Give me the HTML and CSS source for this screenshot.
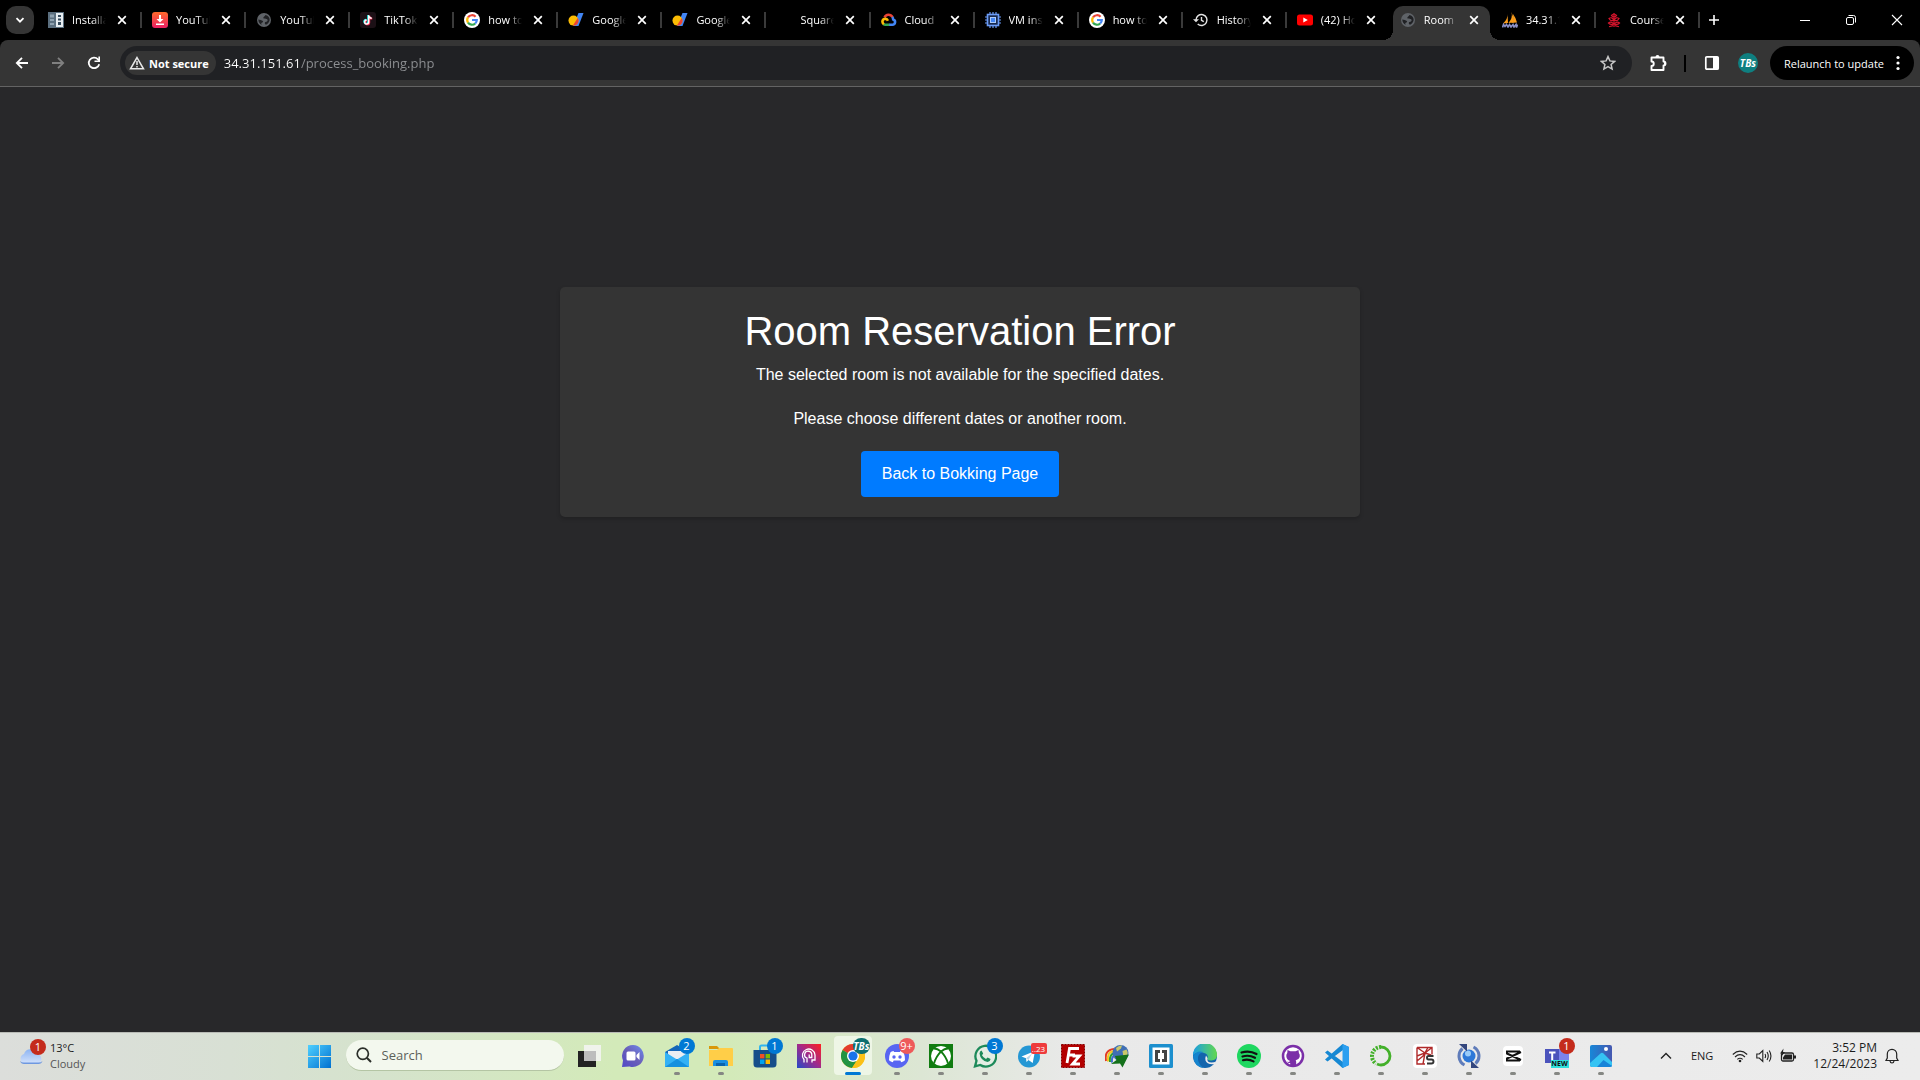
FILE: index.html
```html
<!DOCTYPE html>
<html lang="en">
<head>
<meta charset="utf-8">
<title>Room Reservation Error</title>
<meta name="viewport" content="width=device-width, initial-scale=1">
<link rel="stylesheet" href="styles.css">
</head>
<body>
<svg class="sprite" aria-hidden="true">
  <symbol id="x" viewBox="0 0 10 10"><path d="M1.2 1.2l7.6 7.6M8.8 1.2L1.2 8.8" stroke="currentColor" stroke-width="1.7" fill="none"/></symbol>
  <symbol id="globe" viewBox="0 0 16 16"><circle cx="8" cy="8" r="7" fill="#5f6368"/><path d="M2.300 7.500c1.500.6 3.500.4 4.500 1.500s-.6 1.800-1.600 1.900l.5 1.900c-2-.7-3.400-2.800-3.400-5.300zM9.200 3c.4 1.200-1.700 1.500-1.900 2.700s2.200.9 3.400 1.300 1.200 1.800.3 2.400-2.200.2-2.200 1.500.9 1.900 1.900 1.500c2-1.100 3.100-3 2.900-5.300-.3-2-1.600-3.600-4.400-4.100z" fill="#202124"/></symbol>
  <symbol id="google" viewBox="0 0 16 16"><circle cx="8" cy="8" r="8" fill="#fff"/><g fill="none" stroke-width="2.200"><path d="M4 5.400A4.800 4.800 0 0 1 11.600 4.800" stroke="#ea4335"/><path d="M4 5.400a4.800 4.800 0 0 0 0 5.200" stroke="#fbbc05"/><path d="M4 10.600a4.800 4.800 0 0 0 7.200.9" stroke="#34a853"/><path d="M8 8h4.800a4.800 4.800 0 0 1-1.600 3.500" stroke="#4285f4"/></g></symbol>
  <symbol id="domains" viewBox="0 0 16 16"><path d="M10.500 1H15.500L10.500 14H5.200z" fill="#4285f4"/><circle cx="5.500" cy="8.600" r="5" fill="#fbbc04"/><path d="M9.700 5.900a5 5 0 0 1-3.500 7.700q-.7.100-1.300 0z" fill="#ea4335"/></symbol>
</svg>

<header class="browser">
  <div class="strip">
    <button class="tab-search" aria-label="Search tabs"><svg width="12" height="12" viewBox="0 0 12 12"><path d="M2.500 4.200L6 7.700l3.500-3.500" fill="none" stroke="#fff" stroke-width="1.800"/></svg></button>
    <div class="tabs">
      <div class="tab"><svg class="fav" viewBox="0 0 16 16"><path d="M0 0h16v16H0z" fill="#5b6f7f"/><path d="M8 1h7v14H8z" fill="#e8eef2"/><path d="M2 2.500h4v3H2zM2 7h4v2H2zM2 11h4v2H2z" fill="#8fa2b0"/><path d="M10 3h3v2h-3zM10 6.500h3v2h-3zM10 10h3v3h-3z" fill="#34495a"/></svg><span class="name">Installa</span><button class="close" aria-label="Close tab"><svg><use href="#x"/></svg></button></div>
      <div class="tab"><svg class="fav" viewBox="0 0 16 16"><defs><linearGradient id="yd" x2="0" y2="1"><stop stop-color="#ff6a2c"/><stop offset="1" stop-color="#ea1e63"/></linearGradient></defs><rect width="16" height="16" rx="3" fill="url(#yd)"/><path d="M7 3h2v4h2.500L8 10.500 4.500 7H7zM4 11.500h8V13H4z" fill="#fff"/></svg><span class="name">YouTub</span><button class="close" aria-label="Close tab"><svg><use href="#x"/></svg></button></div>
      <div class="tab"><svg class="fav"><use href="#globe"/></svg><span class="name">YouTub</span><button class="close" aria-label="Close tab"><svg><use href="#x"/></svg></button></div>
      <div class="tab"><svg class="fav" viewBox="0 0 16 16"><rect width="16" height="16" rx="3" fill="#1c1016"/><g fill="none" stroke-width="1.800"><path d="M8.100 3v6.600a2 2 0 1 1-2-2M8.100 3.500c.3 1.600 1.600 2.300 3 2.400" stroke="#25f4ee"/><path d="M9.300 3.800v6.600a2 2 0 1 1-2-2M9.300 4c.3 1.600 1.600 2.600 3 2.700" stroke="#fe2c55"/><path d="M8.700 3.300V10a2 2 0 1 1-2-2M8.700 3.600c.3 1.600 1.600 2.500 3 2.600" stroke="#fff" stroke-width="1.400"/></g></svg><span class="name">TikTok</span><button class="close" aria-label="Close tab"><svg><use href="#x"/></svg></button></div>
      <div class="tab"><svg class="fav"><use href="#google"/></svg><span class="name">how to</span><button class="close" aria-label="Close tab"><svg><use href="#x"/></svg></button></div>
      <div class="tab"><svg class="fav"><use href="#domains"/></svg><span class="name">Google</span><button class="close" aria-label="Close tab"><svg><use href="#x"/></svg></button></div>
      <div class="tab"><svg class="fav"><use href="#domains"/></svg><span class="name">Google</span><button class="close" aria-label="Close tab"><svg><use href="#x"/></svg></button></div>
      <div class="tab"><svg class="fav"></svg><span class="name">Square</span><button class="close" aria-label="Close tab"><svg><use href="#x"/></svg></button></div>
      <div class="tab"><svg class="fav" viewBox="0 0 16 16"><g fill="none" stroke-width="2.600"><path d="M3.600 5.500C5 2 9.500 1.700 11.600 5.200" stroke="#ea4335"/><path d="M11.200 5c.7.800 1 1.600 1 2.400 2.800.9 2.400 5.300-.8 5.300H8" stroke="#4285f4"/><path d="M8.300 12.700H4.200q-1 0-1.700-.6" stroke="#34a853"/><path d="M2.800 12.300C.3 10.300 1.600 6.700 4.400 6.800q1.800.2 2.500 2" stroke="#fbbc05"/></g></svg><span class="name">Cloud</span><button class="close" aria-label="Close tab"><svg><use href="#x"/></svg></button></div>
      <div class="tab"><svg class="fav" viewBox="0 0 16 16"><path d="M5 0v16M8 0v16M11 0v16M0 5h16M0 8h16M0 11h16" stroke="#6b9cf7" stroke-width="1.200"/><rect x="2.500" y="2.500" width="11" height="11" fill="#17294d" stroke="#6b9cf7" stroke-width="1.600"/><rect x="5.500" y="5.500" width="5" height="5" fill="#4285f4" stroke="#aecbfa"/></svg><span class="name">VM inst</span><button class="close" aria-label="Close tab"><svg><use href="#x"/></svg></button></div>
      <div class="tab"><svg class="fav"><use href="#google"/></svg><span class="name">how to</span><button class="close" aria-label="Close tab"><svg><use href="#x"/></svg></button></div>
      <div class="tab"><svg class="fav" viewBox="0 0 16 16"><path d="M3 8a5.500 5.500 0 1 1 1.700 4M8.500 5v3.300l2.300 1.400" fill="none" stroke="#e3e3e3" stroke-width="1.400"/><path d="M0 7.300h6L3 10.300z" fill="#e3e3e3"/></svg><span class="name">History</span><button class="close" aria-label="Close tab"><svg><use href="#x"/></svg></button></div>
      <div class="tab last-before"><svg class="fav" viewBox="0 0 16 16"><rect y="2.500" width="16" height="11" rx="2.500" fill="#f00"/><path d="M6.300 5.500v5L10.800 8z" fill="#fff"/></svg><span class="name">(42) Ho</span><button class="close" aria-label="Close tab"><svg><use href="#x"/></svg></button></div>
      <div class="tab active"><svg class="fav"><use href="#globe"/></svg><span class="name">Room</span><button class="close" aria-label="Close tab"><svg><use href="#x"/></svg></button></div>
      <div class="tab"><svg class="fav" viewBox="0 0 16 16"><path d="M5.500 2Q6 7 1 11.500L6 11zM9.500 0q1.500 6-3 11l5-.4Q12 5 9.500 0zM11 2q3 4 4 8.500l-3.500.3z" fill="#f89c1c"/><path d="M.5 15.500l1-3 1.500 2 1.500-2 1.500 2.500 1.500-2.500 1.500 2.500 2-2.500 1 2.500 2-2.500.5 3 1-3" fill="none" stroke="#8b90c8" stroke-width="1.600"/></svg><span class="name">34.31.1</span><button class="close" aria-label="Close tab"><svg><use href="#x"/></svg></button></div>
      <div class="tab"><svg class="fav" viewBox="0 0 16 16"><g fill="none" stroke="#d5142c" stroke-width="1.200"><path d="M8 1v14M5.500 3.500q2.500-3 5 0-2.500 3-5 0zM3 6.500q3-2 4.500 1.500-2.500 2-4.500-1.500zM13 6.500q-3-2-4.500 1.500 2.500 2 4.500-1.500zM2.500 11q2.500-2 5 .7-2.500 1.800-5-.7zM13.500 11q-2.500-2-5 .7 2.500 1.800 5-.7zM3 14.800l4-1.200M13 14.800l-4-1.200"/></g></svg><span class="name">Course</span><button class="close" aria-label="Close tab"><svg><use href="#x"/></svg></button></div>
    </div>
    <button class="new-tab" aria-label="New tab"><svg width="12" height="12" viewBox="0 0 12 12"><path d="M6 1v10M1 6h10" stroke="#fff" stroke-width="1.600"/></svg></button>
    <div class="controls">
      <button aria-label="Minimize"><svg width="12" height="12" viewBox="0 0 12 12"><path d="M1 6.500h10" stroke="#fff"/></svg></button>
      <button aria-label="Restore"><svg width="12" height="12" viewBox="0 0 12 12"><rect x="1.500" y="3.500" width="7" height="7" rx="1.500" fill="none" stroke="#fff"/><path d="M3.500 1.500h5a2 2 0 0 1 2 2v5" fill="none" stroke="#fff"/></svg></button>
      <button aria-label="Close"><svg width="12" height="12" viewBox="0 0 12 12"><path d="M1 1l10 10M11 1L1 11" stroke="#fff" stroke-width="1.100"/></svg></button>
    </div>
  </div>

  <div class="toolbar">
    <nav class="nav">
      <button aria-label="Back"><svg width="16" height="16" viewBox="0 0 16 16"><path d="M14 8H3M8 2.800L2.800 8 8 13.200" fill="none" stroke="#fff" stroke-width="1.800"/></svg></button>
      <button aria-label="Forward"><svg width="16" height="16" viewBox="0 0 16 16"><path d="M2 8h11M8 2.800L13.200 8 8 13.200" fill="none" stroke="#808080" stroke-width="1.800"/></svg></button>
      <button aria-label="Reload"><svg width="16" height="16" viewBox="0 0 16 16"><path d="M13.200 9.200A5.300 5.300 0 1 1 12 4.300L13.500 6" fill="none" stroke="#fff" stroke-width="1.800"/><path d="M14 1.500V7H8.500V5.400h3.900V1.500z" fill="#fff"/></svg></button>
    </nav>
    <form class="omnibox">
      <button type="button" class="chip"><svg width="16" height="14" viewBox="0 0 16 14"><path d="M8 1.600L14.500 12.800h-13z" fill="none" stroke="#e8e8e8" stroke-width="1.500"/><path d="M8 5v4M8 10v1.500" stroke="#e8e8e8" stroke-width="1.500"/></svg><span>Not secure</span></button>
      <input class="url" type="text" aria-label="Address" value="34.31.151.61/process_booking.php">
      <button type="button" class="star" aria-label="Bookmark this page"><svg width="16" height="16" viewBox="0 0 16 16"><path d="M8 1.600l1.900 4.300 4.700.5-3.500 3.100 1 4.600L8 11.700l-4.100 2.400 1-4.600L1.400 6.400l4.700-.5z" fill="none" stroke="#c7c7c7" stroke-width="1.500"/></svg></button>
    </form>
    <button class="tool" aria-label="Extensions"><svg width="18" height="18" viewBox="0 0 18 18"><path d="M2.500 3.500h12v4a2 2 0 0 1 0 4v4.500h-12v-4a2.200 2.200 0 0 0 0-4.500z" fill="none" stroke="#fff" stroke-width="1.900" stroke-linejoin="round"/><path d="M6.500 3a2 2 0 0 1 4 0zM15 7.500a2 2 0 0 1 0 4z" fill="#fff"/></svg></button>
    <span class="rule"></span>
    <button class="tool" aria-label="Side panel"><svg width="16" height="16" viewBox="0 0 16 16"><rect x="1.800" y="1.800" width="12.400" height="12.400" rx="1" fill="none" stroke="#fff" stroke-width="1.700"/><path d="M9 2h5v12H9z" fill="#fff"/></svg></button>
    <button class="avatar" aria-label="Profile">TBs</button>
    <button class="relaunch"><span>Relaunch to update</span><svg width="4" height="16" viewBox="0 0 4 16"><g fill="#fff"><circle cx="2" cy="2.500" r="1.600"/><circle cx="2" cy="8" r="1.600"/><circle cx="2" cy="13.500" r="1.600"/></g></svg></button>
  </div>
</header>

<main class="page">
  <section class="card">
    <h1>Room Reservation Error</h1>
    <p>The selected room is not available for the specified dates.</p>
    <p>Please choose different dates or another room.</p>
    <a class="btn" href="#">Back to Bokking Page</a>
  </section>
</main>

<footer class="taskbar">
  <button class="weather">
    <span class="weather-icon"><svg width="24" height="24" viewBox="0 0 24 24"><defs><linearGradient id="cl" x2="0" y2="1"><stop stop-color="#8db4f2"/><stop offset="1" stop-color="#d3e2fb"/></linearGradient></defs><path d="M5 19.500a5 5 0 0 1 0-9.500 6.500 6.500 0 0 1 12.500 0A5 5 0 0 1 19.500 19.500z" fill="url(#cl)"/><path d="M1 17q1 3 4 3h14.500q3 0 4-3-1.500 1.500-4 1.500H5Q2.500 18.500 1 17z" fill="#6e98e0"/></svg><b class="badge red">1</b></span>
    <span class="weather-text"><span>13°C</span><span class="muted">Cloudy</span></span>
  </button>

  <div class="apps">
    <button class="app" aria-label="Start"><svg viewBox="0 0 24 24"><defs><linearGradient id="w" x2="1" y2="1"><stop stop-color="#4fd0ff"/><stop offset="1" stop-color="#0070d0"/></linearGradient></defs><path d="M0 1h11v11H0zM12 1h11v11H12zM0 13h11v11H0zM12 13h11v11H12z" fill="url(#w)"/></svg></button>
    <label class="search"><svg width="16" height="16" viewBox="0 0 16 16"><circle cx="6.800" cy="6.800" r="5.600" fill="none" stroke="#2b2f2a" stroke-width="1.700"/><path d="M10.800 10.800L15 15" stroke="#2b2f2a" stroke-width="2"/></svg><input type="text" placeholder="Search" aria-label="Search"></label>
    <button class="app" aria-label="Task view"><svg viewBox="0 0 24 24"><path d="M1 7h18v16H1z" fill="#222"/><path d="M7 1h17v16H7z" fill="#f4f4f4" opacity=".85"/><path d="M7 7h12v10H7z" fill="#bdbdbd"/></svg></button>
    <button class="app" aria-label="Chat"><svg viewBox="0 0 24 24"><defs><linearGradient id="ch" x1="1" x2="0" y2="1"><stop stop-color="#6f8df0"/><stop offset=".5" stop-color="#6a5fb8"/><stop offset="1" stop-color="#5048c8"/></linearGradient></defs><path d="M12 1a11 11 0 1 1-3.500 21.500L1 23l1-6.500A11 11 0 0 1 12 1z" fill="url(#ch)"/><rect x="5.500" y="7.500" width="9" height="9" rx="1.500" fill="#fff"/><path d="M15.500 11l3-3v8l-3-3z" fill="#fff"/></svg></button>
    <button class="app open" aria-label="Mail"><svg viewBox="0 0 24 24"><path d="M0 8L12 1l12 7v15H0z" fill="#1466b8"/><path d="M3 7h18v8H3z" fill="#e9edf2"/><path d="M0 8l12 7.500L24 8v15H0z" fill="#33b1f5"/><path d="M0 23l12-8 12 8z" fill="#1490df"/></svg><b class="badge">2</b></button>
    <button class="app open" aria-label="File Explorer"><svg viewBox="0 0 24 24"><path d="M0 2h8l3 3H0z" fill="#d9980a"/><path d="M0 6h8l2-2h13q1 0 1 1v17H0z" fill="#ffce48"/><path d="M4 22v-4q0-2 2-2h11q2 0 2 2v4z" fill="#1a8fe0"/><path d="M7 19h9v3H7z" fill="#0a63ae"/></svg></button>
    <button class="app" aria-label="Microsoft Store"><svg viewBox="0 0 24 24"><path d="M7 8V3q0-1.500 1.500-1.500h7Q17 1.500 17 3v5" fill="none" stroke="#30b5f0" stroke-width="2"/><path d="M.5 6h23v14q0 3.500-3.500 3.500H4Q.5 23.500.5 20z" fill="#164e8a"/><path d="M7 10h4.400v4.400H7z" fill="#f25022"/><path d="M12.600 10H17v4.400h-4.400z" fill="#7fba00"/><path d="M7 15.500h4.400V20H7z" fill="#00a4ef"/><path d="M12.600 15.500H17V20h-4.400z" fill="#ffb900"/></svg><b class="badge">1</b></button>
    <button class="app" aria-label="Assistant"><svg viewBox="0 0 24 24"><defs><linearGradient id="as" x1="0" y1="1" x2="1" y2="0"><stop stop-color="#2449c8"/><stop offset=".5" stop-color="#a02a8c"/><stop offset="1" stop-color="#ff2020"/></linearGradient></defs><path d="M0 0h24v24H0z" fill="url(#as)"/><path d="M7 18.500v-3a6.300 6.300 0 1 1 11-4.500v5h-3v2.500M10 18.500v-4.300a3.600 3.600 0 1 1 4.800-3.200v2.500h-2.600V10.500" fill="none" stroke="#fff" stroke-width="1.300"/></svg></button>
    <button class="app open current" aria-label="Google Chrome"><svg viewBox="0 0 24 24"><circle cx="12" cy="12" r="12" fill="#fbc116"/><path d="M12 12L1.600 6A12 12 0 0 1 22.400 6z" fill="#e33b2e"/><path d="M1.600 6A12 12 0 0 0 11 24l6-9.500-5-2.500z" fill="#229342"/><path d="M12 6h10.400A12 12 0 0 1 11 24l6.200-9z" fill="#fbc116"/><circle cx="12" cy="12" r="6" fill="#fff"/><circle cx="12" cy="12" r="4.600" fill="#1a73e8"/></svg><b class="badge teal">TBs</b></button>
    <button class="app open" aria-label="Discord"><svg viewBox="0 0 24 24"><circle cx="12" cy="12" r="12" fill="#5865f2"/><path d="M8.500 7q-2 .3-3 1.200-1.800 4-1.500 8 1.700 1.600 3.800 2l.9-1.700h6.600l.9 1.700q2.100-.4 3.800-2 .3-4-1.500-8-1-.9-3-1.200l-.6 1h-5.800z" fill="#fff"/><circle cx="9" cy="13" r="1.700" fill="#5865f2"/><circle cx="15" cy="13" r="1.700" fill="#5865f2"/></svg><b class="badge coral">9+</b></button>
    <button class="app open" aria-label="Xbox"><svg viewBox="0 0 24 24"><path d="M0 0h24v24H0z" fill="#107c10"/><circle cx="12" cy="12" r="10" fill="#fff"/><path d="M5 4.500Q8.500 4.500 12 7.500q3.500-3 7-3M5 19.500Q7 12.500 12 7.500q5 5 7 12" fill="none" stroke="#107c10" stroke-width="1.800"/></svg></button>
    <button class="app open" aria-label="WhatsApp"><svg viewBox="0 0 24 24"><path d="M2 22.300l1.500-5.500A10.400 10.400 0 1 1 7.300 21z" fill="#e4eee4" stroke="#1d8a5a" stroke-width="2.300"/><path d="M8.500 6.500l1.700 3-1.200 1.700q1.300 2.600 4 3.800l1.600-1.400 3 1.500q-.3 2.700-3 2.900Q7.500 16.500 6.500 9.500q.3-2.300 2-3z" fill="#1d8a5a"/></svg><b class="badge">3</b></button>
    <button class="app open" aria-label="Telegram"><svg viewBox="0 0 24 24"><circle cx="12" cy="12.500" r="11" fill="#2497d4"/><path d="M4.500 12.500L18 7l-2.300 12-4.200-3-2 2-.5-3.800z" fill="#fff"/><path d="M9 14.200L15 9.500l-3.500 6.500z" fill="#b7d7ea"/></svg><b class="badge count">..23</b></button>
    <button class="app open" aria-label="FileZilla"><svg viewBox="0 0 24 24"><path d="M.5.500h23v23H.5z" fill="#b30000" stroke="#800" stroke-dasharray="2 1"/><path d="M6 19L8.500 4.500H18M7.500 11H14M11.500 12h7l-7 8h7.500" fill="none" stroke="#fff" stroke-width="2.800"/></svg></button>
    <button class="app open" aria-label="Download Manager"><svg viewBox="0 0 24 24"><g fill="none" stroke-width="2"><path d="M1 17Q-1 6 9 5" stroke="#e23b25"/><path d="M3 17.500Q1.500 8 9 7" stroke="#f6c61b"/><path d="M5 18Q4 10 10 9" stroke="#2a9f32"/><path d="M7 18.500Q6 12 11 11" stroke="#3c6fd0"/></g><circle cx="15.500" cy="9" r="8" fill="#3f6fb5"/><path d="M11 4q3-3 6-2.500l-1 3-4 3zM17.500 7l4-1.500q1.500 2 1 5l-4 3z" fill="#c9c86a"/><path d="M10 12l14-1.500-6.500 13-2.500-4L6 20l5.500-4z" fill="#14701b"/></svg></button>
    <button class="app open" aria-label="Brackets"><svg viewBox="0 0 24 24"><rect width="24" height="24" rx="1.500" fill="#1c8fce"/><path d="M3.500 3.500h17v17h-17z" fill="#fff"/><path d="M11 7.500H7.500v9H11M13 7.500h3.500v9H13" fill="none" stroke="#444" stroke-width="3"/></svg></button>
    <button class="app open" aria-label="Microsoft Edge"><svg viewBox="0 0 24 24"><defs><linearGradient id="ed" x2="1" y2="0"><stop stop-color="#1b9de2"/><stop offset="1" stop-color="#62d84e"/></linearGradient></defs><circle cx="12" cy="12" r="12" fill="#1264ad"/><path d="M0 11A12 12 0 0 1 24 11q0 5-5.500 5.500-5 .3-4-2.500 1-3-2-4.500Q5 6.500 0 11z" fill="url(#ed)"/><path d="M0 12q4-6 10-4-6 2-5 8 1 5 6 8Q1 23 0 12z" fill="#1584ce"/><path d="M14.500 14q-1 4.500 4 4.500 3 0 4.500-1l-1 2.500q-8 1-9.500-3.500-.5-3 .5-5z" fill="#ecebec"/></svg></button>
    <button class="app open" aria-label="Spotify"><svg viewBox="0 0 24 24"><circle cx="12" cy="12" r="12" fill="#1ed760"/><path d="M4.500 8.500q8-2.500 15 1.500M5.500 12.500q6.500-2 12.500 1.300M6 16.200q5.500-1.500 10.500 1.200" fill="none" stroke="#111" stroke-width="2.200" stroke-linecap="round"/></svg></button>
    <button class="app open" aria-label="GitHub Desktop"><svg viewBox="0 0 24 24"><circle cx="12" cy="12" r="10" fill="#fff" stroke="#7b2fa8" stroke-width="2.500"/><path d="M6.500 6l3 1.200h5l3-1.200.4 3q1.300 1.500.8 4-1 3-4 3.300.6 1 .5 2.500V22h-6v-3q-2.500.4-3-1.500l1.500.5 1.500-1Q5.500 16 5.300 12q0-1.800 1-3z" fill="#7b2fa8"/></svg></button>
    <button class="app open" aria-label="Visual Studio Code"><svg viewBox="0 0 24 24"><path d="M17.500 0L24 3v18l-6.500 3L0 8.500 2.500 6.500 18 18V6L2.500 17.500 0 15.500z" fill="#1688d3"/><path d="M17.500 0L24 3v18l-6.500 3z" fill="#2b9ff0"/></svg></button>
    <button class="app open" aria-label="Anaconda"><svg viewBox="0 0 24 24"><path d="M12 3a9 9 0 0 1 0 18q-2 0-4-1" fill="none" stroke="#43b02a" stroke-width="2.800"/><path d="M12 3a9 9 0 0 0-5 16.500" fill="none" stroke="#43b02a" stroke-width="4" stroke-dasharray="2 1.200"/></svg></button>
    <button class="app open" aria-label="Spyder"><svg viewBox="0 0 24 24"><rect width="24" height="24" rx="4" fill="#fff"/><path d="M4 3.500h15v7M4 3.500V20h8M4 12l8-3 7-5.500M4 3.500L12 9l-2 11M12 9l6 2M4 17l6-5 5-8.500" fill="none" stroke="#b02a2a" stroke-width="1.400"/><path d="M20.500 12h-5q-1.500 0-1.500 1.800 0 1.700 1.500 1.700h3q2 0 2 2t-2 2H14" fill="none" stroke="#333" stroke-width="1.900"/></svg></button>
    <button class="app open" aria-label="Sync"><svg viewBox="0 0 24 24"><circle cx="12" cy="12" r="6.500" fill="#2e78d8"/><circle cx="11" cy="9.500" r="3" fill="#9acbf8"/><path d="M7.500 21A10 10 0 0 1 5.500 4.500" fill="none" stroke="#5f7cba" stroke-width="3"/><path d="M2 0h8v7.500z" fill="#34477f"/><path d="M16.500 3a10 10 0 0 1 2 16.500" fill="none" stroke="#5f7cba" stroke-width="3"/><path d="M22 24h-8v-7.500z" fill="#34477f"/></svg></button>
    <button class="app open" aria-label="CapCut"><svg viewBox="0 0 24 24"><rect x="2" y="2" width="20" height="20" rx="4" fill="#fff"/><path d="M18 10V7.500H6V9.500L20 16M18 14v2.500H6v-2L20 8" fill="none" stroke="#111" stroke-width="2"/></svg></button>
    <button class="app open" aria-label="Microsoft Teams"><svg viewBox="0 0 24 24"><path d="M9 5h15v12q-1 5-7 5-8 0-8-7z" fill="#7b83eb"/><path d="M0 5h14v14H0z" fill="#4b53bc"/><path d="M4 8.500h6.500M7.200 8.500V16" stroke="#fff" stroke-width="2"/></svg><i class="tag">NEW</i><b class="badge red">1</b></button>
    <button class="app open" aria-label="Photos"><svg viewBox="0 0 24 24"><defs><linearGradient id="ph" x2="1"><stop stop-color="#1787d8"/><stop offset="1" stop-color="#4658b0"/></linearGradient></defs><rect x="1" y="1" width="22" height="22" rx="2" fill="url(#ph)"/><path d="M1 19L11.500 9.500q1.500-1.300 3 0l8.500 8.500v3q0 2-2 2H3q-2 0-2-2z" fill="#35c3f3"/><path d="M8 23l6.500-7 8.500 6-2 1z" fill="#1683d8"/><circle cx="17" cy="5" r="2" fill="#fff"/></svg></button>
  </div>

  <div class="tray">
    <button aria-label="Show hidden icons"><svg width="12" height="12" viewBox="0 0 12 12"><path d="M1 8.500l5-5 5 5" fill="none" stroke="#222" stroke-width="1.400"/></svg></button>
    <button class="lang">ENG</button>
    <button class="status" aria-label="Network, sound, battery">
      <svg width="16" height="16" viewBox="0 0 16 16"><path d="M.8 6.500q7.200-6.600 14.400 0M3 9q5-4.600 10 0M5.300 11.400q2.700-2.300 5.400 0" fill="none" stroke="#222" stroke-width="1.100"/><circle cx="8" cy="13" r="1.300" fill="#222"/></svg>
      <svg width="16" height="16" viewBox="0 0 16 16"><path d="M.8 6h2.500l3.500-3.500v11L3.300 10H.8z" fill="none" stroke="#222" stroke-width="1.100"/><path d="M9 6q1.200 2 0 4M11 4q2.500 4 0 8M13.200 2.500q3.500 5.500 0 11" fill="none" stroke="#222" stroke-width="1.100"/></svg>
      <svg width="16" height="16" viewBox="0 0 16 16"><rect x="1.500" y="5" width="12" height="8" rx="1.500" fill="none" stroke="#222" stroke-width="1.300"/><path d="M5 6.500h7v5H3V9.500zM14 7.500h2v3h-2zM3.500.5L0 5.500h2L1 9l4-5H3z" fill="#222"/></svg>
    </button>
    <button class="clock"><span>3:52 PM</span><span>12/24/2023</span></button>
    <button aria-label="Notifications"><svg width="14" height="16" viewBox="0 0 14 16"><path d="M1 12.500h12L11.700 10V6a4.700 4.700 0 0 0-9.400 0v4zM5 13q.3 2 2 2t2-2" fill="none" stroke="#222" stroke-width="1.200"/></svg></button>
  </div>
</footer>
</body>
</html>
```
FILE: styles.css
```css
* { box-sizing: border-box; }

body {
  margin: 0;
  min-height: 100vh;
  display: flex;
  flex-direction: column;
  background: #28282a;
  color: #fff;
  font-family: "Open Sans", "Noto Sans", sans-serif;
  font-size: 12px;
}

button, input {
  margin: 0;
  padding: 0;
  border: 0;
  background: none;
  color: inherit;
  font: inherit;
}

button { display: flex; align-items: center; justify-content: center; }
svg { display: block; flex: none; }
.sprite { position: absolute; width: 0; height: 0; }

/* Tab strip */
.browser { background: #000; }
.strip { display: flex; align-items: center; height: 40px; padding-left: 6px; }
.tab-search { width: 28px; height: 28px; flex: none; border-radius: 10px; background: #353535; }
.tabs { display: flex; flex: 0 1 1662px; min-width: 0; height: 40px; margin-left: 4px; }

.tab {
  position: relative;
  display: flex;
  align-items: center;
  flex: 1 1 104px;
  min-width: 0;
  padding-left: 10px;
}
.tab::after {
  content: "";
  width: 2px;
  height: 16px;
  margin-left: auto;
  background: #3a3a3a;
}
.tab.last-before::after, .tab.active::after { background: none; }
.fav { width: 16px; height: 16px; }
.name {
  flex: 0 1 34px;
  min-width: 0;
  margin-left: 8px;
  overflow: hidden;
  white-space: nowrap;
  font-size: 11px;
  line-height: 16px;
  -webkit-mask-image: linear-gradient(to right, #000 60%, transparent);
  mask-image: linear-gradient(to right, #000 60%, transparent);
}
.close { width: 16px; height: 16px; margin-left: 8px; flex: none; }
.close svg { width: 10px; height: 10px; }

.tab.active {
  flex: 1 1 97px;
  margin: 6px 2px 0;
  padding: 0 0 6px 7px;
  border-radius: 10px 10px 0 0;
  background: #353535;
}
.tab.active::before, .tab.active::after {
  content: "";
  position: absolute;
  bottom: 0;
  width: 10px;
  height: 10px;
}
.tab.active::before { left: -10px; background: radial-gradient(circle at 0 0, transparent 10px, #353535 10px); }
.tab.active::after { right: -10px; background: radial-gradient(circle at 100% 0, transparent 10px, #353535 10px); }

.new-tab { width: 28px; height: 28px; flex: none; }
.controls { display: flex; margin-left: auto; }
.controls button { width: 46px; height: 40px; }

/* Toolbar */
.toolbar {
  display: flex;
  align-items: center;
  height: 47px;
  padding: 0 6px 0 4px;
  border-bottom: 1px solid #636363;
  border-radius: 8px 8px 0 0;
  background: #353535;
}
.nav { display: flex; }
.nav button { width: 36px; height: 34px; }
.omnibox {
  display: flex;
  align-items: center;
  flex: 1;
  height: 34px;
  margin-left: 8px;
  padding: 0 16px 0 5px;
  border-radius: 17px;
  background: #202124;
}
.chip {
  gap: 4px;
  height: 24px;
  padding: 0 7px 0 4px;
  border-radius: 12px;
  background: #353535;
  font-size: 11px;
  font-weight: 700;
  white-space: nowrap;
}
/* The host is bright, the path after it is dimmed */
.url {
  flex: 1;
  min-width: 0;
  height: 24px;
  margin-left: 8px;
  outline: 0;
  font-size: 13px;
  background: linear-gradient(to right, #fff 77px, #8f9194 77px);
  -webkit-background-clip: text;
  background-clip: text;
  -webkit-text-fill-color: transparent;
}
.tool { width: 36px; height: 34px; margin-left: 8px; }
.rule { width: 2px; height: 17px; margin-left: 8px; background: #000; }
.avatar {
  width: 20px;
  height: 20px;
  margin-left: 8px;
  border-radius: 50%;
  background: #0f7f80;
  font-size: 10px;
  font-style: italic;
  font-weight: 700;
}
.relaunch {
  gap: 12px;
  height: 34px;
  margin-left: 12px;
  padding: 0 14px;
  border-radius: 17px;
  background: #000;
  white-space: nowrap;
  font-size: 11px;
}

/* Page */
.page {
  flex: 1;
  padding: 200px 20px 40px;
  font-family: "Liberation Sans", Arial, sans-serif;
  font-size: 16px;
  line-height: 24px;
}
.card {
  max-width: 800px;
  margin: 0 auto;
  padding: 20px;
  border-radius: 5px;
  background: #343434;
  box-shadow: 0 2px 4px rgba(0, 0, 0, 0.2);
  text-align: center;
}
.card h1 { margin: 0 0 8px; font-size: 40px; font-weight: 400; line-height: 48px; }
.card p { margin: 0 0 20px; }
.btn {
  display: block;
  width: fit-content;
  margin: 0 auto;
  padding: 11px 21px;
  border-radius: 4px;
  background: #007bff;
  color: #fff;
  text-decoration: none;
}

/* Taskbar */
.taskbar {
  display: grid;
  grid-template-columns: 1fr auto 1fr;
  align-items: center;
  height: 48px;
  padding-bottom: 2px;
  border-top: 1px solid #b9bbb6;
  background: linear-gradient(to right, #dcdedb 0, #d8e0d4 12%, #d5e3cc 20%, #d3eab9 32%, #d3eab9 38%, #dce6d4 48%, #e9e9e9 56%, #ececec 100%);
  color: #1c1c1c;
}
.weather { justify-self: start; gap: 7px; padding-left: 19px; text-align: left; }
.weather-icon { position: relative; width: 24px; height: 24px; }
.weather-text, .clock { display: flex; flex-direction: column; font-size: 12px; line-height: 16px; }
.weather-text { font-size: 11px; }
.muted { color: #555; }

.apps { display: flex; align-items: center; }
.app { position: relative; width: 44px; height: 45px; flex: none; }
.app svg { width: 24px; height: 24px; }
.app.open::after {
  content: "";
  position: absolute;
  left: 19px;
  bottom: 3px;
  width: 6px;
  height: 3px;
  border-radius: 2px;
  background: #858783;
}
.app.current { width: 38px; height: 39px; margin: 0 3px; border-radius: 4px; background: #eef6e6; }
.app.current::after { left: 11px; bottom: 0; width: 16px; background: #0078d4; }

.badge {
  position: absolute;
  top: 5px;
  right: 4px;
  min-width: 16px;
  height: 16px;
  border-radius: 8px;
  background: #0078d4;
  color: #fff;
  font-size: 11px;
  font-weight: 400;
  line-height: 16px;
  text-align: center;
}
.weather-icon .badge { top: -5px; right: -3px; }
.badge.red { background: #c42b1c; }
.badge.coral { background: #ee5a5a; }
.badge.teal { top: 2px; right: 2px; background: #0d6f70; font-size: 10px; font-style: italic; font-weight: 700; }
.badge.count { top: 10px; height: 11px; border-radius: 2px; background: #ee3b3b; font-size: 8px; line-height: 11px; }
.tag {
  position: absolute;
  right: 10px;
  bottom: 10px;
  width: 18px;
  height: 8px;
  background: #2fe0dc;
  color: #111;
  font-size: 7px;
  font-style: normal;
  font-weight: 700;
  line-height: 8px;
  text-align: center;
}

.search {
  display: flex;
  align-items: center;
  gap: 10px;
  width: 218px;
  height: 31px;
  margin: 0 3px 0 4px;
  padding: 0 10px;
  border-bottom: 1px solid #b4c5a4;
  border-radius: 16px;
  background: #f3f8ee;
}
.search input { width: 100%; min-width: 0; outline: 0; font-size: 13px; }
.search input::placeholder { color: #5c615a; opacity: 1; }

.tray { display: flex; align-items: center; justify-self: end; padding-right: 21px; }
.lang { margin-left: 19px; font-size: 11px; }
.status { gap: 8px; margin-left: 19px; }
.clock { align-items: flex-end; margin: 0 8px 0 17px; }
```
